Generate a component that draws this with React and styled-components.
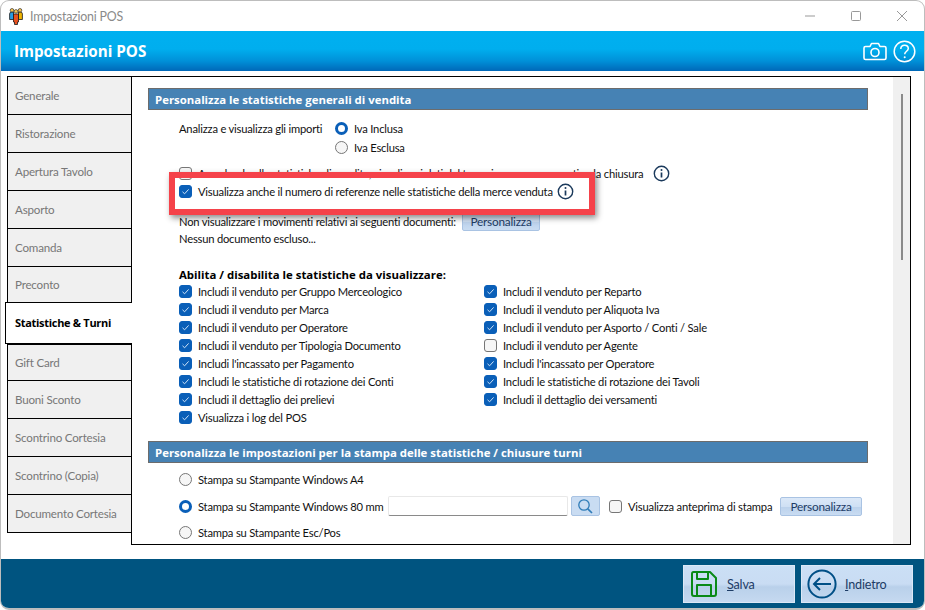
import React from "react";
import styled, { createGlobalStyle } from "styled-components";

const Global = createGlobalStyle`
  html, body { margin: 0; padding: 0; background: #fff; }
  body { font-family: Lato, "Liberation Sans", sans-serif; font-size: 11.2px; letter-spacing: -0.2px; color: #111; overflow: hidden; }
  * { box-sizing: border-box; }
`;
const Win = styled.div`
  width: 925px; height: 610px; background: #fff; border: 1px solid #bdbdbd; border-bottom-width: 2px;
  border-radius: 9px; overflow: hidden; display: flex; flex-direction: column; position: relative;
`;
const TitleBar = styled.div`height: 30px; display: flex; align-items: center; padding: 0 0 0 8px; flex: none;`;
const Logo = styled.svg`width: 14px; height: 17px; margin-right: 7px;`;
const TitleText = styled.div`font-size: 12.4px; color: #8a8a8a; flex: 1;`;
const WinBtns = styled.div`display: flex; gap: 36px; align-items: center; margin-right: 17px; margin-top: -1px;`;
const Header = styled.div`
  height: 40px; flex: none; display: flex; align-items: center; justify-content: space-between; padding: 0 8px 0 13px;
  background: linear-gradient(#00b0f0 0%, #00aeee 45%, #0090d8 75%, #0068b8 100%);
`;
const HeaderTitle = styled.div`font-family: "Open Sans", sans-serif; font-size: 15.2px; letter-spacing: 0; font-weight: 700; color: #fff;`;
const HeaderIcons = styled.div`display: flex; gap: 6px; align-items: center;`;
const Body = styled.div`flex: 1; display: flex; padding: 5px 13px 14px 6px; min-height: 0;`;
const Tabs = styled.div`width: 125px; flex: none; display: flex; flex-direction: column; position: relative; z-index: 1;`;
const Tab = styled.div`
  height: ${p => p.$h || 38}px; border: 1px solid #000; border-bottom: 0; background: #f0f0f0; color: #777; white-space: nowrap;
  display: flex; align-items: center; padding: 0 7px 1px; font-size: 11.6px;
  &:last-child { border-bottom: 1px solid #000; }
`;
const ActiveTab = styled(Tab)`
  height: 42px; background: #fff; color: #000; font-family: "Open Sans", sans-serif; font-size: 11px; font-weight: 700; margin-left: -2px;
  width: 127px; padding-left: 9px; padding-bottom: 2px; border-right: 0; margin-right: -1px; position: relative; border-bottom: 1px solid #000; letter-spacing: -0.3px;
`;
const Panel = styled.div`
  flex: 1; border: 1px solid #000; margin-left: -1px; display: flex; min-width: 0; overflow: hidden; background: #fff;
`;
const Content = styled.div`flex: 1; padding: 11px 25px 0 16px; min-width: 0; overflow: hidden;`;
const Section = styled.div`
  height: 22px; background: #4682b4; border: 1px solid #6c6c6c; color: #fff; font-family: "Open Sans", sans-serif; font-weight: 700; font-size: 11.4px; letter-spacing: 0;
  display: flex; align-items: center; padding-left: 6px; margin-top: ${p => p.$t || 0}px;
`;
const Scroll = styled.div`width: 17px; background: #f0f0f0; flex: none; display: flex; justify-content: center; padding-top: 17px;`;
const Thumb = styled.div`width: 2px; height: 166px; background: #8a8a8a;`;
const Row = styled.div`display: flex; align-items: center; height: 18px; margin-left: ${p => p.$l ?? 31}px; margin-top: ${p => p.$t || 0}px;`;
const Label = styled.span`white-space: nowrap; width: ${p => p.$w ? p.$w + "px" : "auto"}; flex: none;`;
const Box = styled.span`
  width: 13px; height: 13px; border-radius: 3px; flex: none; margin: 0 6px 0 ${p => p.$ml || 0}px; display: inline-flex; align-items: center; justify-content: center;
  background: ${p => p.$on ? "#0a5fb8" : "#f6f6f6"}; border: 1px solid ${p => p.$on ? "#0a5fb8" : "#767676"};
`;
const Radio = styled.span`
  width: 13px; height: 13px; border-radius: 50%; flex: none; margin-right: 6px; background: ${p => p.$on ? "#fff" : "#f6f6f6"};
  border: ${p => p.$on ? "3.5px solid #0a5fb8" : "1px solid #767676"};
`;
const Options = styled.div`display: grid; grid-template-columns: 305px 1fr; grid-auto-rows: 18px; margin-left: 31px;`;
const Opt = styled.div`display: flex; align-items: center; white-space: nowrap;`;
const MiniBtn = styled.div`
  height: 19px; width: ${p => p.$w}px; border: 1px solid #a9c3e3; border-radius: 2px; color: #1d3c66; font-size: 11.8px; display: inline-flex; align-items: center; justify-content: center;
  background: linear-gradient(#dbe8f8 0%, #cfe0f4 50%, #bcd2ec 55%, #c9dcf2 100%); flex: none;
`;
const Bold = styled.div`font-family: "Open Sans", sans-serif; font-size: 11.4px; letter-spacing: 0; font-weight: 700; color: #000; margin: ${p => p.$t || 0}px 0 0 31px; height: 16px; display: flex; align-items: center;`;
const Plain = styled.div`margin-left: 31px; height: 17px; display: flex; align-items: center;`;
const Input = styled.div`width: 180px; height: 20px; background: #fff; border: 1px solid #e8e8e8; border-bottom: 1px solid #8a8a8a; border-radius: 2px; flex: none;`;
const SearchBtn = styled.div`width: 29px; height: 20px; margin-left: 3px; background: #c9dcf2; border: 1px solid #a9c3e3; border-radius: 2px; display: flex; align-items: center; justify-content: center; flex: none;`;
const Footer = styled.div`flex: none; height: 49px; background: #005480; display: flex; justify-content: flex-end; gap: 6px; padding: 6px 11px 0 0;`;
const FootBtn = styled.div`
  width: 112px; height: 38px; border: 1px solid #dce8f6; display: flex; align-items: center; font-size: 12.6px; color: #1d3c66;
  background: linear-gradient(#cbdff5 0%, #c9dcf3 50%, #b9d0ea 58%, #c5d9f0 100%);
`;
const FootLabel = styled.span`margin-left: ${p => p.$l}px;`;
const Highlight = styled.div`
  position: absolute; left: 168px; top: 171px; width: 426px; height: 43px; border: 6px solid #f5424a;
  box-shadow: 2px 3px 6px rgba(0,0,0,.45); pointer-events: none; z-index: 5;
`;
const InfoSvg = styled.svg`margin-left: 4px; flex: none;`;
const SaveIcon = styled.svg`margin-left: 6px;`;
const BackIcon = styled.svg`margin-left: 5px;`;

const Check = () => <svg width="9" height="9" viewBox="0 0 9 9"><path d="M1.500 4.800 3.600 6.800 7.600 2.400" fill="none" stroke="#cfe3f8" strokeWidth="1" /></svg>;
const CB = ({ on }) => <Box $on={on}>{on && <Check />}</Box>;
const Info = () => (
  <InfoSvg width="17" height="17" viewBox="0 0 17 17">
    <circle cx="8.500" cy="8.500" r="7.200" fill="none" stroke="#1b3a5c" strokeWidth="1.4" />
    <circle cx="8.500" cy="5" r="1" fill="#1b3a5c" />
    <path d="M8.500 7.500v5" stroke="#1b3a5c" strokeWidth="1.7" />
  </InfoSvg>
);

const tabs1 = [["Generale", 38], ["Ristorazione", 38], ["Apertura Tavolo", 38], ["Asporto", 38], ["Comanda", 38], ["Preconto", 36]];
const tabs2 = [["Gift Card", 36], ["Buoni Sconto", 38], ["Scontrino Cortesia", 38], ["Scontrino (Copia)", 38], ["Documento Cortesia", 39]];
const opts = [
  ["Includi il venduto per Gruppo Merceologico", 1], ["Includi il venduto per Reparto", 1],
  ["Includi il venduto per Marca", 1], ["Includi il venduto per Aliquota Iva", 1],
  ["Includi il venduto per Operatore", 1], ["Includi il venduto per Asporto / Conti / Sale", 1],
  ["Includi il venduto per Tipologia Documento", 1], ["Includi il venduto per Agente", 0],
  ["Includi l'incassato per Pagamento", 1], ["Includi l'incassato per Operatore", 1],
  ["Includi le statistiche di rotazione dei Conti", 1], ["Includi le statistiche di rotazione dei Tavoli", 1],
  ["Includi il dettaglio dei prelievi", 1], ["Includi il dettaglio dei versamenti", 1],
  ["Visualizza i log del POS", 1],
];

export default function App() {
  return (
    <Win>
      <Global />
      <TitleBar>
        <Logo viewBox="0 0 14 17">
          <path d="M.6 6Q.6 4 2.500 4H4.500V11.500H.6Z" fill="#2b9be0" stroke="#1a1a1a" strokeWidth=".8" />
          <path d="M9.500 4H11.500Q13.400 4 13.400 6V11.500H9.500Z" fill="#f0b400" stroke="#1a1a1a" strokeWidth=".8" />
          <path d="M4.500 6H9.500V14H8.500V16.500H5.500V14H4.500Z" fill="#e8501e" stroke="#1a1a1a" strokeWidth=".8" />
          <circle cx="3" cy="2.300" r="1.800" fill="#f6c453" stroke="#1a1a1a" strokeWidth=".6" />
          <circle cx="11" cy="2.300" r="1.800" fill="#f6c453" stroke="#1a1a1a" strokeWidth=".6" />
          <circle cx="7" cy="3.400" r="1.800" fill="#f6c453" stroke="#1a1a1a" strokeWidth=".6" />
        </Logo>
        <TitleText>Impostazioni POS</TitleText>
        <WinBtns>
          <svg width="10" height="10" viewBox="0 0 10 10"><path d="M0 5h10" stroke="#999" /></svg>
          <svg width="10" height="10" viewBox="0 0 10 10"><rect x=".5" y=".5" width="9" height="9" rx="1" fill="none" stroke="#999" /></svg>
          <svg width="10" height="10" viewBox="0 0 10 10"><path d="M0 0l10 10M10 0L0 10" stroke="#999" /></svg>
        </WinBtns>
      </TitleBar>
      <Header>
        <HeaderTitle>Impostazioni POS</HeaderTitle>
        <HeaderIcons>
          <svg width="24" height="20" viewBox="0 0 24 20" fill="none" stroke="#fff" strokeWidth="1.6" strokeLinejoin="round">
            <path d="M2.500 5.500H7L8.500 2.500H15.500L17 5.500H21.500Q23 5.500 23 7V17Q23 18.500 21.500 18.500H2.500Q1 18.500 1 17V7Q1 5.500 2.500 5.500Z" />
            <circle cx="12" cy="11.500" r="4" /></svg>
          <svg width="23" height="23" viewBox="0 0 23 23" fill="none" stroke="#fff" strokeWidth="1.5">
            <circle cx="11.500" cy="11.500" r="10.300" />
            <path d="M7.800 9c0-2.400 1.700-3.800 3.800-3.800s3.700 1.400 3.700 3.300c0 2.700-3.600 2.900-3.600 5.800" />
            <circle cx="11.700" cy="17.300" r="1" fill="#fff" stroke="none" /></svg>
        </HeaderIcons>
      </Header>
      <Body>
        <Tabs>
          {tabs1.map(([t, h]) => <Tab key={t} $h={h}>{t}</Tab>)}
          <ActiveTab>Statistiche &amp; Turni</ActiveTab>
          {tabs2.map(([t, h]) => <Tab key={t} $h={h}>{t}</Tab>)}
        </Tabs>
        <Panel>
          <Content>
            <Section>Personalizza le statistiche generali di vendita</Section>
            <Row $t={9}>
              <Label $w={156}>Analizza e visualizza gli importi</Label>
              <Radio $on />
              <Label>Iva Inclusa</Label>
            </Row>
            <Row $t={1} $l={187}><Radio /><Label>Iva Esclusa</Label></Row>
            <Row $t={8}><CB /><Label $w={451}>Accedendo alle statistiche di vendita, visualizza i dati del turno in corso e consentine la chiusura</Label><Info /></Row>
            <Row><CB on /><Label>Visualizza anche il numero di referenze nelle statistiche della merce venduta</Label><Info /></Row>
            <Row $t={12}><Label $w={283}>Non visualizzare i movimenti relativi ai seguenti documenti:</Label><MiniBtn $w={78}>Personalizza</MiniBtn></Row>
            <Plain>Nessun documento escluso...</Plain>
            <Bold $t={19}>Abilita / disabilita le statistiche da visualizzare:</Bold>
            <Options>
              {opts.map(([t, on]) => <Opt key={t}><CB on={!!on} /><Label>{t}</Label></Opt>)}
            </Options>
            <Section $t={15}>Personalizza le impostazioni per la stampa delle statistiche / chiusure turni</Section>
            <Row $t={7}><Radio /><Label>Stampa su Stampante Windows A4</Label></Row>
            <Row $t={9}>
              <Radio $on /><Label $w={190}>Stampa su Stampante Windows 80 mm</Label><Input />
              <SearchBtn>
                <svg width="17" height="17" viewBox="0 0 17 17" fill="none" stroke="#2f7cb8" strokeWidth="1.3"><circle cx="7" cy="7" r="5.200" /><path d="M10.800 10.800 15 15" strokeWidth="1.7" /></svg>
              </SearchBtn>
              <Box $ml={9} />
              <Label $w={152}>Visualizza anteprima di stampa</Label>
              <MiniBtn $w={82}>Personalizza</MiniBtn>
            </Row>
            <Row $t={8}><Radio /><Label>Stampa su Stampante Esc/Pos</Label></Row>
          </Content>
          <Scroll><Thumb /></Scroll>
        </Panel>
      </Body>
      <Footer>
        <FootBtn>
          <SaveIcon width="28" height="28" viewBox="0 0 28 28" fill="none" stroke="#0a8a16" strokeWidth="2" strokeLinejoin="round">
            <path d="M3.500 2H20L26 8V24Q26 26 24 26H4Q2 26 2 24V4Q2 2 3.500 2Z" /><path d="M7 2V9H18V2M7 26V15H21V26" /></SaveIcon>
          <FootLabel $l={9}><u>S</u>alva</FootLabel>
        </FootBtn>
        <FootBtn>
          <BackIcon width="30" height="30" viewBox="0 0 30 30" fill="none" stroke="#004f86" strokeWidth="2">
            <circle cx="15" cy="15" r="13.600" /><path d="M24 15H7M13 9 7 15l6 6" /></BackIcon>
          <FootLabel $l={8}><u>I</u>ndietro</FootLabel>
        </FootBtn>
      </Footer>
      <Highlight />
    </Win>
  );
}
